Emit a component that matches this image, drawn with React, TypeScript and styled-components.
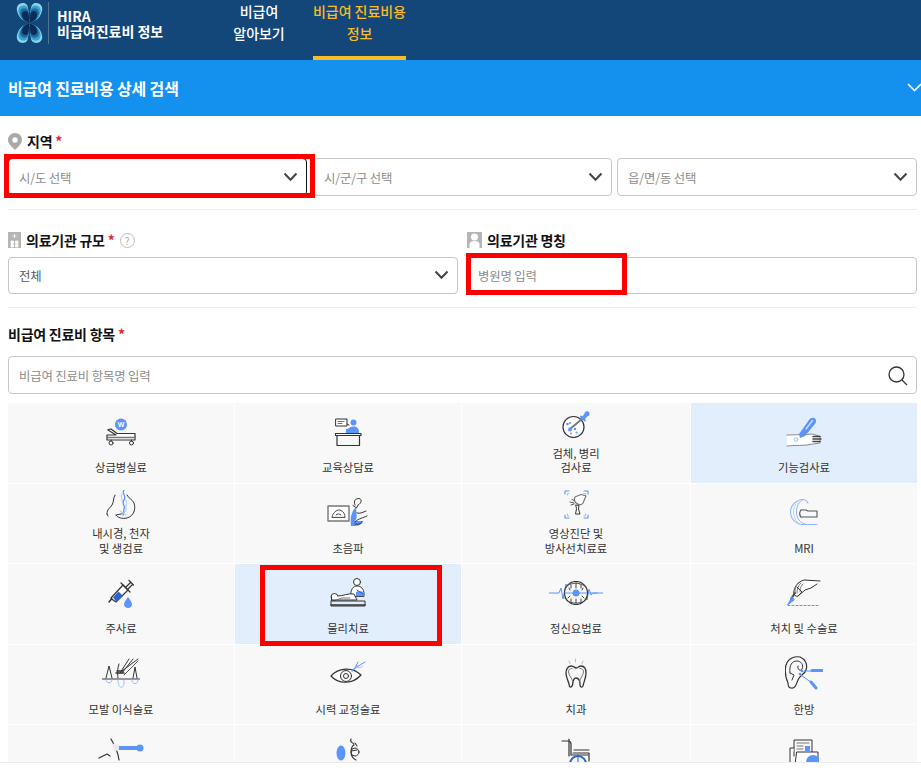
import React from "react";
import styled, { createGlobalStyle } from "styled-components";

const Global = createGlobalStyle`
  * { box-sizing: border-box; }
  html, body { margin: 0; padding: 0; background: #fff; }
  body { font-family: "Noto Sans CJK KR", "Noto Sans", sans-serif; color: #111; }
`;

const Page = styled.div`
  position: relative;
  width: 921px;
  height: 771px;
  overflow: hidden;
  background: #fff;
`;

const Header = styled.header`
  height: 60px;
  background: #134779;
  display: flex;
  align-items: stretch;
`;

const Brand = styled.div`
  width: 211px;
  display: flex;
  align-items: flex-start;
  padding: 2px 0 0 16px;
`;

const BrandLogo = styled.div`
  width: 33px;
  height: 42px;
  padding-right: 5px;
  border-right: 1px solid #4f7498;
  display: flex;
  align-items: center;
`;

const BrandName = styled.div`
  margin: 7px 0 0 8px;
  font-size: 14px;
  line-height: 15px;
  font-weight: 700;
  color: #fff;
  letter-spacing: 0;
  white-space: nowrap;
`;

const NavItem = styled.div<{ $active?: boolean; $width: number }>`
  width: ${(p) => p.$width}px;
  height: 60px;
  text-align: center;
  font-size: 14px;
  line-height: 22px;
  font-weight: 500;
  color: ${(p) => (p.$active ? "#f9bc24" : "#fff")};
  border-bottom: 4px solid ${(p) => (p.$active ? "#f9bc24" : "transparent")};
  margin-right: ${(p) => (p.$active ? 0 : 6)}px;
  letter-spacing: -0.05px;
  white-space: nowrap;
`;

const TitleBar = styled.div`
  height: 56px;
  background: #1491ee;
  display: flex;
  align-items: center;
  justify-content: space-between;
  padding-left: 8px;
  color: #fff;
  font-size: 16px;
  font-weight: 700;
  letter-spacing: -0.15px;
  overflow: hidden;
`;

const TitleChevron = styled.svg`
  width: 15px;
  height: 9px;
  flex: none;
  margin: -1px -1px 0 0;
`;

const Form = styled.div`
  padding: 0 4px 0 8px;
`;

const Section = styled.section<{ $top: number; $bottom: number; $line?: boolean }>`
  padding-top: ${(p) => p.$top}px;
  padding-bottom: ${(p) => p.$bottom}px;
  border-bottom: ${(p) => (p.$line ? "1px solid #ececec" : "none")};
`;

const LabelRow = styled.div`
  display: flex;
  align-items: center;
  height: 20px;
  font-size: 14px;
  font-weight: 700;
  letter-spacing: -0.25px;
  color: #111;
  white-space: nowrap;
`;

const Star = styled.span`
  color: #e8202a;
  margin-left: 3px;
`;

const LabelIcon = styled.svg`
  flex: none;
  margin-right: 5px;
`;

const HelpMark = styled.span`
  width: 15px;
  height: 15px;
  margin-left: 5px;
  border: 1px solid #bdbdbd;
  border-radius: 50%;
  color: #a9a9a9;
  font-size: 10px;
  font-weight: 400;
  line-height: 13px;
  text-align: center;
  letter-spacing: 0;
`;

const SelectRow = styled.div<{ $gap?: number }>`
  display: flex;
  margin-top: ${(p) => p.$gap ?? 7}px;
`;

const FieldBox = styled.div<{ $focus?: boolean; $flex?: number; $ml?: number; $h?: number }>`
  flex: ${(p) => p.$flex ?? 1} 1 0;
  min-width: 0;
  height: ${(p) => p.$h ?? 38}px;
  margin-left: ${(p) => p.$ml ?? 0}px;
  padding: 1px 8px 0 10px;
  display: flex;
  align-items: center;
  justify-content: space-between;
  background: #fff;
  border: 1px solid ${(p) => (p.$focus ? "#111" : "#c6c6c6")};
  border-radius: 4px;
  font-size: 12.4px;
  letter-spacing: -0.15px;
  color: #8b8b8b;
`;

const FieldValue = styled.span`
  color: #555;
`;

const Caret = styled.svg`
  width: 15px;
  height: 10px;
  flex: none;
  margin-top: -2px;
`;

const TwoCols = styled.div`
  display: grid;
  grid-template-columns: 450px 450px;
  column-gap: 9px;
`;

const Grid = styled.div`
  display: grid;
  grid-template-columns: 226px 226px 228px 226px;
  grid-auto-rows: 79.5px;
  gap: 1px;
  margin-top: 9px;
`;

const Cell = styled.div<{ $on?: boolean }>`
  background: ${(p) => (p.$on ? "#e3eefd" : "#f8f8f8")};
  display: flex;
  flex-direction: column;
  align-items: center;
  padding-bottom: 8px;
`;

const IconSlot = styled.div`
  flex: 1;
  min-height: 0;
  display: flex;
  align-items: center;
  justify-content: center;
`;

const CellLabel = styled.div`
  font-size: 11.3px;
  line-height: 14.5px;
  color: #333;
  text-align: center;
  white-space: pre-line;
`;

const Callout = styled.div<{ $x: number; $y: number; $w: number; $h: number }>`
  position: absolute;
  left: ${(p) => p.$x}px;
  top: ${(p) => p.$y}px;
  width: ${(p) => p.$w}px;
  height: ${(p) => p.$h}px;
  border: 5px solid #fe0000;
  pointer-events: none;
`;

const BottomEdge = styled.div`
  position: absolute;
  left: 0;
  right: 0;
  bottom: 0;
  height: 9px;
  background: #fff;
  border-top: 1px solid #ececec;
`;

const B = "#5b94fb";
const K = "#333";
const G = "#777";

const LOBE = "M13.500 20C10 18 5 17 3 13C1 9 0 6 1.500 3C3 0 8 -1 10.500 1.500C13 4 12 10 13.500 20Z";

const Lobes = ({ fill, scale }: { fill: string; scale: number }) => (
  <g fill={fill} transform={`translate(13.500 20) scale(${scale}) translate(-13.500 -20)`}>
    <path d={LOBE} />
    <path d={LOBE} transform="matrix(-1 0 0 1 27 0)" />
    <path d={LOBE} transform="matrix(1 0 0 -1 0 40)" />
    <path d={LOBE} transform="matrix(-1 0 0 -1 27 40)" />
  </g>
);

const Logo = () => (
  <svg width="27" height="40" viewBox="0 0 27 40">
    <Lobes fill="#86d6ec" scale={1} />
    <Lobes fill="#3b9fcb" scale={0.88} />
    <Lobes fill="#1c6a9f" scale={0.74} />
    <Lobes fill="#0c2c58" scale={0.6} />
  </svg>
);

const Ico = ({ w, h, children }: { w: number; h: number; children: React.ReactNode }) => (
  <svg width={w} height={h} viewBox={`0 0 ${w} ${h}`} fill="none" stroke={K} strokeWidth="1" strokeLinecap="round" strokeLinejoin="round">
    {children}
  </svg>
);

const BedIcon = () => (
  <Ico w={30} h={28}>
    <circle cx="15" cy="6.500" r="6" fill={B} stroke="none" />
    <text x="15" y="9" fontSize="7" fontWeight="700" textAnchor="middle" fill="#fff" stroke="none" fontFamily="Liberation Sans, sans-serif">W</text>
    <path d="M2 11.500L5 11L11 15.500H29V22H1V17H10L2 12Z" fill="#fff" strokeWidth="1.200" />
    <path d="M1 19.500H29" stroke={G} strokeWidth="1.500" />
    <circle cx="5" cy="25" r="2" />
    <circle cx="25.500" cy="25" r="2" />
    <path d="M5 22V23M25.500 22V23" />
  </Ico>
);

const CounselIcon = () => (
  <Ico w={27} h={28}>
    <path d="M1 1H12V8H1Z" fill="#fff" />
    <path d="M3 3.500H9M3 5.500H7" stroke={G} />
    <path d="M12 6L14 7" />
    <circle cx="18.500" cy="4.500" r="3" fill={B} stroke="none" />
    <path d="M11 11C14 11 14 9 18 8.500C23 8.500 24 11 24 15H11Z" fill={B} stroke="none" />
    <path d="M0.500 15.500H26V17.500H0.500Z" fill="#fff" strokeWidth="1.200" />
    <path d="M2 17.500V27.500H24.500V17.500" strokeWidth="1.200" />
  </Ico>
);

const SpecimenIcon = () => (
  <Ico w={28} h={27}>
    <circle cx="11.500" cy="16" r="10.500" fill="#fff" strokeWidth="1.200" />
    <path d="M8 18L20 8" stroke={G} strokeWidth="2" />
    <path d="M19 5.500L23 9.500" stroke={B} strokeWidth="1.800" />
    <path d="M21 7.500L24 4" stroke={B} strokeWidth="3.500" />
    <circle cx="25" cy="2.800" r="2.500" fill={B} stroke="none" />
    <g fill={B} stroke="none">
      <circle cx="8" cy="18.500" r="2" />
      <circle cx="5.500" cy="13" r="1.300" />
      <circle cx="8" cy="12" r="1" />
      <circle cx="13" cy="18" r="1.200" />
      <circle cx="14.500" cy="21.500" r="1.100" />
      <circle cx="9" cy="22.500" r="1" />
    </g>
  </Ico>
);

const FunctionIcon = () => (
  <Ico w={36} h={30}>
    <path d="M1 18C8 18 13 17.500 19 17.500L27 17L34 19.500V26L27 27C20 29 8 28 1 29" fill="#fff" stroke="#8a8a8a" />
    <path d="M27 19.500H34M27 22H35M27 24.500H34" stroke="#444" strokeWidth="1.500" />
    <path d="M13 17L23 3C25 0 30 0 30 4C30 6 29 7 28 8L19 19L14 21Z" fill={B} stroke="none" />
    <path d="M20 12L26.500 3.500" stroke="#cfe0ff" strokeWidth="1.300" />
    <circle cx="10" cy="22.500" r="1.800" stroke="#9fc0fb" />
  </Ico>
);

const ScopeIcon = () => (
  <Ico w={30} h={30}>
    <path d="M1 24C1 19 4 18 6 15C8 12 7 8 9 5" />
    <path d="M21 5C22 8 26 9 28 13C30 19 28 26 21 28C16 29 12 28 10 25" />
    <path d="M1 24L2 26M10 25C11 24 15 25 17 23" strokeWidth="1" />
    <path d="M18 0C15 4 21 5 18 10C15 14 20 16 18 19C17 21 19 23 17 25" stroke={B} strokeWidth="1.300" />
    <path d="M16 4C14 7 17 9 16 12M20 10C22 13 19 16 20 20" stroke="#a9c6fb" />
    <path d="M14 21L20 25M20 21L15 25" stroke="#a9c6fb" />
  </Ico>
);

const UltraIcon = () => (
  <Ico w={42} h={29}>
    <path d="M1 8H22V23H1Z" fill="#fff" stroke={G} strokeWidth="1.400" />
    <path d="M5 19C6 14 10 12 12 12C15 12 18 15 18 19Z" stroke="#444" />
    <path d="M9 17C10 15.500 13 15.500 14 17" stroke="#444" />
    <path d="M28 7C26 2 29 0.500 32 0.500C35 1 35 5 31 7L29.500 10L26 7.500" />
    <path d="M29 9C24 14 23 20 24 28H28C33 28 36 25 36 23H28C31 20 29 14 29 9Z" fill={B} stroke="none" />
    <path d="M30 15C34 16 36 14 39 13M28 24C32 20 36 20 40 18M28 26C32 27 35 25 35 24" />
  </Ico>
);

const ImagingIcon = () => (
  <Ico w={25} h={29}>
    <g stroke={B}>
      <path d="M1 4V1H5M20 1H24V4M1 25V28H5M20 28H24V25" strokeWidth="1.100" />
      <path d="M3.500 5V3.500H5M19.500 3.500H21.500V5M3.500 24V26H5M20 26H21.500V24" stroke="#9fc0fb" />
    </g>
    <path d="M11 7L17 4.500L22 6L19 13C18 15 15 15 13 13.500C10 12 10 9 11 7Z" fill="#fff" stroke={G} strokeWidth="1.200" />
    <path d="M12 15L15 15.500L14.500 19L16 24H11.500L12.500 19Z" fill="#fff" strokeWidth="1" />
    <path d="M6 12L10 13M8 9.500L10 10.500M7 15L10 14" stroke="#555" />
  </Ico>
);

const MriIcon = () => (
  <Ico w={28} h={26}>
    <path d="M27 25.500H13C6 25.500 0.500 20 0.500 13C0.500 6 6 0.500 13 0.500C15 0.500 17 2 18 4" stroke="#8fb5fb" strokeWidth="1.100" />
    <path d="M15 25C10 24 6.500 19 6.500 13C6.500 7 9 2.500 13 0.500" stroke="#8fb5fb" />
    <path d="M3.500 13C3.500 18 6 23 10 25M3.500 13C3.500 8 6 3 10 1" stroke="#b8d0fc" />
    <path d="M11 10.500C9 14 9.500 17 11 19" stroke="#8fb5fb" />
    <path d="M11 11H16L18 12H27V18H11C9.500 16 9.500 13 11 11Z" fill="#f8f8f8" stroke="#555" strokeWidth="1.100" />
  </Ico>
);

const SyringeIcon = () => (
  <Ico w={26} h={31}>
    <path d="M1 25L6 19" stroke="#222" strokeWidth="1.300" />
    <path d="M3 21L15 8L20 13L8 25L5 23Z" fill="#fff" strokeWidth="1.200" />
    <path d="M5 20.500L10.500 14.500L15 19L8.500 25Z" fill="#2b63c9" stroke="none" />
    <path d="M13 6L22 15M18 10L22 6M20 12L24 8M21 3.500L25.500 8" strokeWidth="1.200" />
    <path d="M20 20C22 23 24 25 24 27.500C24 29.500 22 31 20 31C18 31 16 29.500 16 27.500C16 25 18 23 20 20Z" fill={B} stroke="none" />
  </Ico>
);

const TherapyIcon = () => (
  <Ico w={36} h={31}>
    <circle cx="27" cy="5" r="3.500" fill="#fff" />
    <path d="M21 19C20 13 23 9 27 9C31 9 34 12 34 17V19Z" fill="#fff" />
    <path d="M26 15C29 13 33 14 35 17L33 19H26Z" fill={B} stroke="none" />
    <path d="M27 13C29 14 31 16 33 17" stroke="#2b63c9" />
    <circle cx="4.500" cy="20" r="3.500" fill="#fff" />
    <path d="M8 19C13 19 18 16 24 17L27 23H1.500" fill="#fff" />
    <path d="M1.500 20V24H35V29H1V24" />
    <path d="M1 28H35" strokeWidth="1.500" />
    <path d="M6 23L12 21H20" stroke={G} />
  </Ico>
);

const MentalIcon = () => (
  <Ico w={54} h={24}>
    <path d="M0 12H10L12 7L14 18L17 3L19 20L21 12H48" stroke={B} />
    <path d="M33 12L36 6L38 19L40 8L42 14L44 12H54" stroke={B} />
    <circle cx="27" cy="12" r="11.500" fill="#f8f8f8" strokeWidth="1.200" />
    <path d="M17 6C20 2 24 3 27 2C31 3 34 3 37 6M16 17C19 22 24 22 27 22C31 22 35 22 38 17M27 2V7M22 4V7M32 4V7M20 7L21 9M34 7L33 9M22 22V18M32 22V18M27 22V18M19 17L21 15M35 17L33 15" stroke="#444" />
    <path d="M16 12H38" stroke={B} />
    <circle cx="27" cy="12" r="3.500" fill={B} stroke="none" />
  </Ico>
);

const SurgeryIcon = () => (
  <Ico w={34} h={27}>
    <path d="M33 2L17 1C11 3 8 7 7 12C6 15 8 18 11 17L18 11L24 9L30 5" fill="#fff" />
    <path d="M12 3C9 6 8 9 8 13M14 4C11 7 10 10 10 14M16 5C13 8 13 11 13 13" stroke={G} />
    <path d="M10 8L15 13L11 17" strokeWidth="1" />
    <path d="M8 14L4 20" stroke="#444" strokeWidth="2" />
    <path d="M5 18L0.500 26L7 21Z" fill={B} stroke={B} />
    <path d="M1 26.500H33" stroke={B} strokeDasharray="2 2" />
  </Ico>
);

const HairIcon = () => (
  <Ico w={38} h={30}>
    <path d="M0.500 21H37.500" stroke={G} strokeWidth="1.500" />
    <path d="M4 20L7 8L10 20M31 20L33 9L35 20" strokeWidth="1" />
    <path d="M16 20C15 13 16 9 17 6" strokeWidth="1" />
    <path d="M14 15H22M15 13H21" strokeWidth="1.300" />
    <path d="M18 15L27 1M20 15L31 1M20 13L36 1" />
    <path d="M22 17L30 9L36 3" stroke="#555" />
    <path d="M4 22C4 26 10 26 10 22" stroke="#9fc0fb" />
    <path d="M16 22C16 32 23 32 22 22" stroke="#9fc0fb" />
    <path d="M30 22C30 27 36 27 36 22" stroke="#9fc0fb" />
  </Ico>
);

const EyeIcon = () => (
  <Ico w={36} h={24}>
    <path d="M1 15C8 7 22 5 31 14C23 23 9 24 1 15Z" fill="#fff" strokeWidth="1.200" />
    <circle cx="16" cy="15" r="5.500" fill="#f8f8f8" />
    <circle cx="16" cy="15" r="2.500" />
    <path d="M22 10L27 5" stroke={B} strokeWidth="1.300" />
    <path d="M26 5L28 1M27 6L35 1" stroke={B} />
    <path d="M27 5C27 8 31 7 33 5" stroke="#9fc0fb" />
  </Ico>
);

const ToothIcon = () => (
  <Ico w={22} h={30}>
    <path d="M10.500 1V4M4 3L5 5.500M18 3L17 5.500" stroke="#9fc0fb" />
    <path d="M6 8C9 8 10 10 11 10C13 10 14 8 16 8C20 8 21 12 21 15C21 20 19 23 18 28C17 30 15 29 15 27C15 24 14 20 11 20C8 20 8 24 7.500 27C7 29 5 30 4.500 28C3.500 23 1 20 1 15C1 12 2.500 8 6 8Z" strokeWidth="1.300" />
    <path d="M8 24C7 20 4 18 3.500 14C3.500 11 5 10.500 7 10.500" stroke={G} />
    <path d="M14.500 24C15 20 18 18 18.500 14C18.500 11 17 10.500 15 10.500" stroke={G} />
  </Ico>
);

const EarIcon = () => (
  <Ico w={38} h={34}>
    <path d="M3 27C0 20 0 13 1 9C3 2 10 0 15 1C20 3 23 8 21 14C20 18 15 19 13 24C11 29 10 33 6 32C4 32 3 30 3 27Z" strokeWidth="1.200" />
    <path d="M5 17C4 9 7 5 12 5C16 5 19 9 17 13C15 16 12 13 13 10" />
    <path d="M5 17L9 19L7 24" />
    <path d="M19 15H27" stroke={B} />
    <path d="M27 14.500H37" stroke={B} strokeWidth="3" />
    <path d="M16 19L27 27" stroke={B} />
    <path d="M26 26L31 32" stroke={B} strokeWidth="3" />
    <circle cx="17" cy="15" r="1.300" fill={B} stroke="none" />
    <circle cx="15" cy="18" r="1.300" fill={B} stroke="none" />
  </Ico>
);

const EyeDropIcon = () => (
  <Ico w={46} h={32}>
    <path d="M1 20L9 16L12 18" strokeWidth="1.200" />
    <path d="M13 1C16 6 20 13 21 22" strokeWidth="1.200" />
    <path d="M14 6C17 5 20 7 22 7L22 12C20 12 17 13 16 14Z" fill="#e9e9e9" stroke="none" />
    <path d="M21 8H39V12H21Z" fill={B} stroke="none" />
    <circle cx="42" cy="10" r="3.500" fill={B} stroke="none" />
  </Ico>
);

const DropIcon = () => (
  <Ico w={24} h={32}>
    <ellipse cx="5" cy="15" rx="4.500" ry="7.500" fill={B} stroke="none" />
    <path d="M15 1C13 5 18 4 18 7C16 8 15 11 15 14C15 18 18 21 20 22M15 13L21 12M19 5L21 8" strokeWidth="1.100" />
    <circle cx="19" cy="14" r="4" />
  </Ico>
);

const WheelIcon = () => (
  <Ico w={30} h={32}>
    <path d="M1 3H7C9 3 10 4 10 6V17H27" strokeWidth="1.200" />
    <path d="M8 1V18M12 15H28V23" strokeWidth="1.200" />
    <path d="M13 12H28" />
    <circle cx="17" cy="26" r="8" stroke="#2b63c9" strokeWidth="2" />
    <path d="M17 18V34M9 26H25" stroke="#2b63c9" />
  </Ico>
);

const DocIcon = () => (
  <Ico w={30} h={32}>
    <path d="M5 18V2H23V14" fill="#f8f8f8" />
    <path d="M8 5H20M8 8H14M8 11H14" stroke={G} />
    <rect x="16" y="8" width="5" height="5" fill={B} stroke="none" />
    <path d="M5 10H1V30M8 14H29V30H6Z" fill="#fff" />
    <circle cx="24" cy="24" r="7" fill={B} stroke="none" />
  </Ico>
);

const DownCaret = () => (
  <Caret viewBox="0 0 15 10">
    <path d="M1.500 1.500L7.500 7.800L13.500 1.500" fill="none" stroke="#444" strokeWidth="2" />
  </Caret>
);

const items: { label: string; icon: React.ReactNode; on?: boolean }[] = [
  { label: "상급병실료", icon: <BedIcon /> },
  { label: "교육상담료", icon: <CounselIcon /> },
  { label: "검체, 병리\n검사료", icon: <SpecimenIcon /> },
  { label: "기능검사료", icon: <FunctionIcon />, on: true },
  { label: "내시경, 천자\n및 생검료", icon: <ScopeIcon /> },
  { label: "초음파", icon: <UltraIcon /> },
  { label: "영상진단 및\n방사선치료료", icon: <ImagingIcon /> },
  { label: "MRI", icon: <MriIcon /> },
  { label: "주사료", icon: <SyringeIcon /> },
  { label: "물리치료", icon: <TherapyIcon />, on: true },
  { label: "정신요법료", icon: <MentalIcon /> },
  { label: "처치 및 수술료", icon: <SurgeryIcon /> },
  { label: "모발 이식술료", icon: <HairIcon /> },
  { label: "시력 교정술료", icon: <EyeIcon /> },
  { label: "치과", icon: <ToothIcon /> },
  { label: "한방", icon: <EarIcon /> },
  { label: "\u00a0", icon: <EyeDropIcon /> },
  { label: "\u00a0", icon: <DropIcon /> },
  { label: "\u00a0", icon: <WheelIcon /> },
  { label: "\u00a0", icon: <DocIcon /> },
];

export default function App() {
  return (
    <Page>
      <Global />
      <Header>
        <Brand>
          <BrandLogo>
            <Logo />
          </BrandLogo>
          <BrandName>
            HIRA
            <br />
            비급여진료비 정보
          </BrandName>
        </Brand>
        <NavItem $width={96}>
          비급여
          <br />
          알아보기
        </NavItem>
        <NavItem $width={93} $active>
          비급여 진료비용
          <br />
          정보
        </NavItem>
      </Header>
      <TitleBar>
        비급여 진료비용 상세 검색
        <TitleChevron viewBox="0 0 15 9">
          <path d="M1 1L7.500 7.500L14 1" fill="none" stroke="#fff" strokeWidth="1.600" />
        </TitleChevron>
      </TitleBar>
      <Form>
        <Section $top={15} $bottom={13} $line>
          <LabelRow>
            <LabelIcon width="14" height="17" viewBox="0 0 14 17">
              <path fillRule="evenodd" d="M7 0C3 0 0 3 0 6.800C0 11 4 14 7 17C10 14 14 11 14 6.800C14 3 11 0 7 0ZM7 4.300A2.700 2.700 0 1 1 7 9.700A2.700 2.700 0 1 1 7 4.300Z" fill="#a9a9a9" />
            </LabelIcon>
            지역<Star>*</Star>
          </LabelRow>
          <SelectRow>
            <FieldBox $focus $flex={299}>
              시/도 선택
              <DownCaret />
            </FieldBox>
            <FieldBox $flex={299} $ml={6}>
              시/군/구 선택
              <DownCaret />
            </FieldBox>
            <FieldBox $flex={300} $ml={5}>
              읍/면/동 선택
              <DownCaret />
            </FieldBox>
          </SelectRow>
        </Section>
        <Section $top={20} $bottom={13} $line>
          <TwoCols>
            <div>
              <LabelRow>
                <LabelIcon width="13" height="16" viewBox="0 0 13 16">
                  <rect width="13" height="16" fill="#b5b5b5" />
                  <path d="M6.500 2V6M4.500 4H8.500M3 9H5.500V11.500H3ZM7.500 9H10V11.500H7.500ZM3 12.500H5.500V15H3ZM7.500 12.500H10V15H7.500Z" stroke="#fff" fill="#fff" strokeWidth="0.800" />
                </LabelIcon>
                의료기관 규모<Star>*</Star>
                <HelpMark>?</HelpMark>
              </LabelRow>
              <SelectRow>
                <FieldBox $h={37}>
                  <FieldValue>전체</FieldValue>
                  <DownCaret />
                </FieldBox>
              </SelectRow>
            </div>
            <div>
              <LabelRow>
                <LabelIcon width="15" height="16" viewBox="0 0 15 16">
                  <rect width="15" height="16" fill="#b5b5b5" />
                  <circle cx="7.500" cy="5" r="3.500" fill="#fff" />
                  <path d="M2.500 16V12C2.500 10 5 9 7.500 9C10 9 12.500 10 12.500 12V16Z" fill="#fff" />
                </LabelIcon>
                의료기관 명칭
              </LabelRow>
              <SelectRow>
                <FieldBox $h={37}>병원명 입력</FieldBox>
              </SelectRow>
            </div>
          </TwoCols>
        </Section>
        <Section $top={16} $bottom={0}>
          <LabelRow>
            비급여 진료비 항목<Star>*</Star>
          </LabelRow>
          <SelectRow $gap={12}>
            <FieldBox>
              비급여 진료비 항목명 입력
              <svg width="20" height="20" viewBox="0 0 20 20" fill="none" stroke="#333" strokeWidth="1.300">
                <circle cx="8.500" cy="8.500" r="7.500" />
                <path d="M14 14L19 19" />
              </svg>
            </FieldBox>
          </SelectRow>
          <Grid>
            {items.map((it, i) => (
              <Cell key={i} $on={it.on}>
                <IconSlot>{it.icon}</IconSlot>
                <CellLabel>{it.label}</CellLabel>
              </Cell>
            ))}
          </Grid>
        </Section>
      </Form>
      <Callout $x={4} $y={154} $w={311} $h={44} />
      <Callout $x={466} $y={253} $w={161} $h={42} />
      <Callout $x={260} $y={565} $w={182} $h={81} />
      <BottomEdge />
    </Page>
  );
}
